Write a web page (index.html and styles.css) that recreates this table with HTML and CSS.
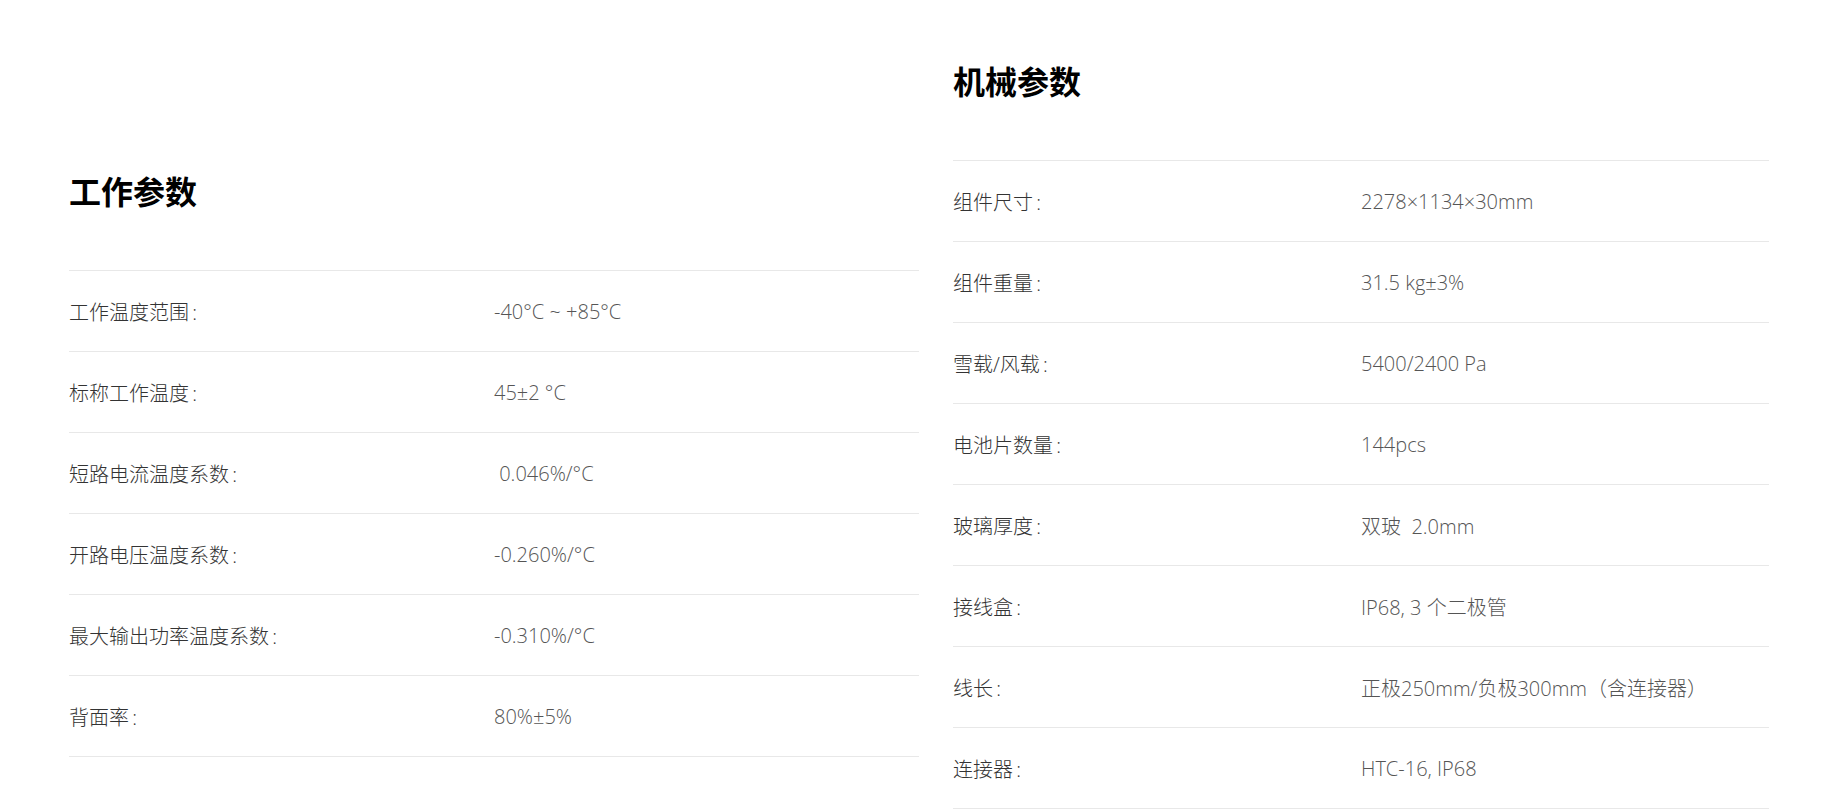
FILE: index.html
```html
<!DOCTYPE html>
<html lang="zh-CN">
<head>
    <meta charset="UTF-8">
    <title>产品参数</title>
    <link rel="stylesheet" href="styles.css">
</head>
<body>

<div class="params">

    <div class="block work">
        <h2>工作参数</h2>
        <ul class="rows">
            <li><span class="name">工作温度范围 :</span><span class="val">-40°C ~ +85°C</span></li>
            <li><span class="name">标称工作温度 :</span><span class="val">45±2 °C</span></li>
            <li><span class="name">短路电流温度系数 :</span><span class="val">&nbsp;0.046%/°C</span></li>
            <li><span class="name">开路电压温度系数 :</span><span class="val">-0.260%/°C</span></li>
            <li><span class="name">最大输出功率温度系数 :</span><span class="val">-0.310%/°C</span></li>
            <li><span class="name">背面率 :</span><span class="val">80%±5%</span></li>
        </ul>
    </div>

    <div class="block mech">
        <h2>机械参数</h2>
        <ul class="rows">
            <li><span class="name">组件尺寸 :</span><span class="val">2278×1134×30mm</span></li>
            <li><span class="name">组件重量 :</span><span class="val">31.5 kg±3%</span></li>
            <li><span class="name">雪载/风载 :</span><span class="val">5400/2400 Pa</span></li>
            <li><span class="name">电池片数量 :</span><span class="val">144pcs</span></li>
            <li><span class="name">玻璃厚度 :</span><span class="val">双玻&nbsp;&nbsp;2.0mm</span></li>
            <li><span class="name">接线盒 :</span><span class="val">IP68, 3 个二极管</span></li>
            <li><span class="name">线长 :</span><span class="val">正极250mm/负极300mm（含连接器）</span></li>
            <li><span class="name">连接器 :</span><span class="val">HTC-16, IP68</span></li>
        </ul>
    </div>

</div>

</body>
</html>
```

FILE: styles.css
```css
html, body, div, span, h2, ul, li {
    margin: 0;
    padding: 0;
    border: 0;
    font: inherit;
}

ul {
    list-style: none;
}

body {
    background: #fff;
    color: #333;
    font-family: "Open Sans", "Noto Sans CJK SC", sans-serif;
    font-weight: 300;
    font-size: 20px;
}

.params {
    display: grid;
    grid-template-columns: 850px 816px;
    column-gap: 34px;
    align-items: start;
    padding: 0 0 0 69px;
}

.block h2 {
    font-family: "Noto Sans CJK SC", sans-serif;
    font-weight: 700;
    font-size: 32px;
    line-height: 48px;
    color: #000;
    margin-bottom: 56px;
}

.mech {
    padding-top: 56px;
}

.work {
    padding-top: 166px;
}

.rows {
    border-top: 1px solid #e8e8e8;
}

.rows li {
    display: flex;
    align-items: center;
    height: 80px;
    border-bottom: 1px solid #e8e8e8;
}

.rows .name {
    width: 50%;
    color: #333;
    word-spacing: -2px;
}

.rows .val {
    width: 50%;
    color: #555;
}
```
